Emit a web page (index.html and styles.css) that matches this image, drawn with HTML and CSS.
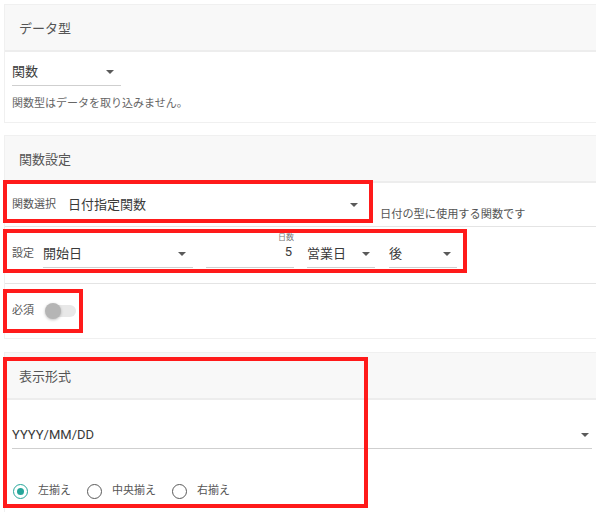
FILE: index.html
```html
<!DOCTYPE html>
<html lang="ja">
<head>
<meta charset="utf-8">
<title>関数設定</title>
<link rel="stylesheet" href="styles.css">
</head>
<body>
<main class="page">
  <section class="card">
    <header class="card-head">データ型</header>
    <div class="type-body">
      <div class="select select-type"><span class="select-value">関数</span><span class="caret"></span></div>
      <p class="help">関数型はデータを取り込みません。</p>
    </div>
  </section>

  <section class="card card-func">
    <header class="card-head">関数設定</header>
    <div class="row row-choose">
      <div class="mark mark-choose">
        <span class="field-label">関数選択</span>
        <div class="select select-func"><span class="select-value">日付指定関数</span><span class="caret"></span></div>
      </div>
      <span class="hint">日付の型に使用する関数です</span>
    </div>
    <div class="row row-setting">
      <div class="mark mark-setting">
        <span class="field-label label-setting">設定</span>
        <div class="select select-base"><span class="select-value">開始日</span><span class="caret"></span></div>
        <div class="number-field">
          <span class="tiny-label">日数</span>
          <span class="number-value">5</span>
        </div>
        <div class="select select-unit"><span class="select-value">営業日</span><span class="caret"></span></div>
        <div class="select select-dir"><span class="select-value">後</span><span class="caret"></span></div>
      </div>
    </div>
    <div class="row row-required">
      <div class="mark mark-required">
        <span class="field-label">必須</span>
        <span class="switch"><span class="switch-track"></span><span class="switch-knob"></span></span>
      </div>
    </div>
  </section>

  <section class="card card-format">
    <header class="card-head">表示形式</header>
    <div class="format-body">
      <div class="select select-format"><span class="select-value latin">YYYY/MM/DD</span><span class="caret"></span></div>
      <div class="radios">
        <label class="radio"><span class="radio-dot checked"></span><span class="radio-text">左揃え</span></label>
        <label class="radio"><span class="radio-dot"></span><span class="radio-text">中央揃え</span></label>
        <label class="radio"><span class="radio-dot"></span><span class="radio-text">右揃え</span></label>
      </div>
    </div>
    <div class="mark mark-format"></div>
  </section>
</main>
</body>
</html>
```

FILE: styles.css
```css
* { box-sizing: border-box; }

html, body {
  margin: 0;
  padding: 0;
  background: #ffffff;
  overflow: hidden;
}

body {
  font-family: Roboto, "Noto Sans CJK JP", sans-serif;
  color: #333333;
}

.page {
  width: 596px;
  padding: 5px 0 0 5px;
}

.card {
  background: #ffffff;
  box-shadow: 0 0 0 1px #f0f0f0;
}

.card-func { margin-top: 14px; }
.card-format { margin-top: 15px; position: relative; }

.card-head {
  height: 47px;
  display: flex;
  align-items: center;
  padding-left: 14px;
  background: #f8f8f8;
  border-bottom: 2px solid #ededed;
  font-size: 13px;
  color: #555555;
}

/* selects */
.select {
  display: flex;
  align-items: center;
  justify-content: space-between;
  height: 28px;
  border-bottom: 1px solid #cfcfcf;
  font-size: 13px;
  line-height: 16px;
  color: #3a3a3a;
}

.caret {
  width: 0;
  height: 0;
  border-left: 4px solid transparent;
  border-right: 4px solid transparent;
  border-top: 4px solid #5a5a5a;
  flex: none;
}

/* card 1 */
.type-body {
  padding: 6px 0 10px 7px;
}

.select-type {
  width: 109px;
  padding-right: 7px;
}

.help {
  margin: 10px 0 0;
  font-size: 11px;
  line-height: 16px;
  color: #666666;
}

/* card 2 rows */
.row {
  display: flex;
  align-items: flex-end;
  border-bottom: 1px solid #e4e4e4;
}

.row-choose { padding-bottom: 3px; }
.row-setting { padding-bottom: 10px; }
.row-required { padding-bottom: 5px; border-bottom: none; }

.mark {
  border: 4px solid #ff1a1a;
  margin-left: -2px;
}

.field-label {
  font-size: 11px;
  line-height: 16px;
  color: #555555;
  flex: none;
}

.mark-choose {
  margin-top: -3px;
  width: 370px;
  height: 43px;
  display: flex;
  align-items: flex-end;
  padding-left: 5px;
}

.mark-choose .field-label { margin-bottom: 6px; }

.select-func {
  margin-left: 12px;
  width: 296px;
  padding-right: 6px;
  border-bottom: none;
}

.hint {
  margin-left: 7px;
  font-size: 11.2px;
  line-height: 16px;
  color: #555555;
}

.mark-setting {
  margin-top: 2px;
  width: 464px;
  height: 44px;
  display: flex;
  align-items: flex-end;
  padding: 0 6px 1px 5px;
}

.label-setting { margin-bottom: 6px; }

.select-base {
  margin-left: 9px;
  width: 150px;
  padding-right: 7px;
}

.number-field {
  margin-left: 13px;
  width: 88px;
  height: 35px;
  display: flex;
  flex-direction: column;
  align-items: flex-end;
  border-bottom: 1px solid #cfcfcf;
}

.tiny-label {
  font-size: 8px;
  line-height: 9px;
  color: #777777;
}

.number-value {
  font-size: 13px;
  line-height: 20px;
  padding-right: 2px;
  color: #3a3a3a;
}

.select-unit {
  margin-left: 13px;
  width: 68px;
  padding-right: 5px;
}

.select-dir {
  margin-left: 14px;
  width: 68px;
  padding-right: 6px;
}

.mark-required {
  margin-top: 5px;
  width: 80px;
  height: 44px;
  display: flex;
  align-items: center;
  padding-left: 5px;
}

.switch {
  display: grid;
  align-items: center;
  margin-left: 11px;
}

.switch-track,
.switch-knob {
  grid-area: 1 / 1;
}

.switch-track {
  width: 30px;
  height: 12px;
  margin-left: 1px;
  border-radius: 6px;
  background: #e8e8e8;
}

.switch-knob {
  width: 16px;
  height: 16px;
  border-radius: 50%;
  background: #b5b5b5;
  box-shadow: 0 1px 3px rgba(0, 0, 0, 0.25);
}

/* card 3 */
.format-body {
  padding: 21px 4px 11px 7px;
}

.select-format {
  padding-right: 3px;
}

.latin {
  font-family: Roboto, sans-serif;
}

.radios {
  display: flex;
  align-items: center;
  margin-top: 32px;
  padding-left: 1px;
  height: 20px;
}

.radio {
  display: flex;
  align-items: center;
  margin-right: 16px;
}

.radio-dot {
  width: 15px;
  height: 15px;
  border-radius: 50%;
  border: 1.5px solid #5a5a5a;
  display: flex;
  align-items: center;
  justify-content: center;
  flex: none;
}

.radio-dot.checked {
  border-color: #26a69a;
}

.radio-dot.checked::after {
  content: "";
  width: 7px;
  height: 7px;
  border-radius: 50%;
  background: #26a69a;
}

.radio-text {
  margin-left: 10px;
  font-size: 11px;
  line-height: 16px;
  color: #555555;
}

.mark-format {
  position: absolute;
  top: 4px;
  left: -2px;
  width: 365px;
  height: 151px;
  margin: 0;
  pointer-events: none;
}
```
